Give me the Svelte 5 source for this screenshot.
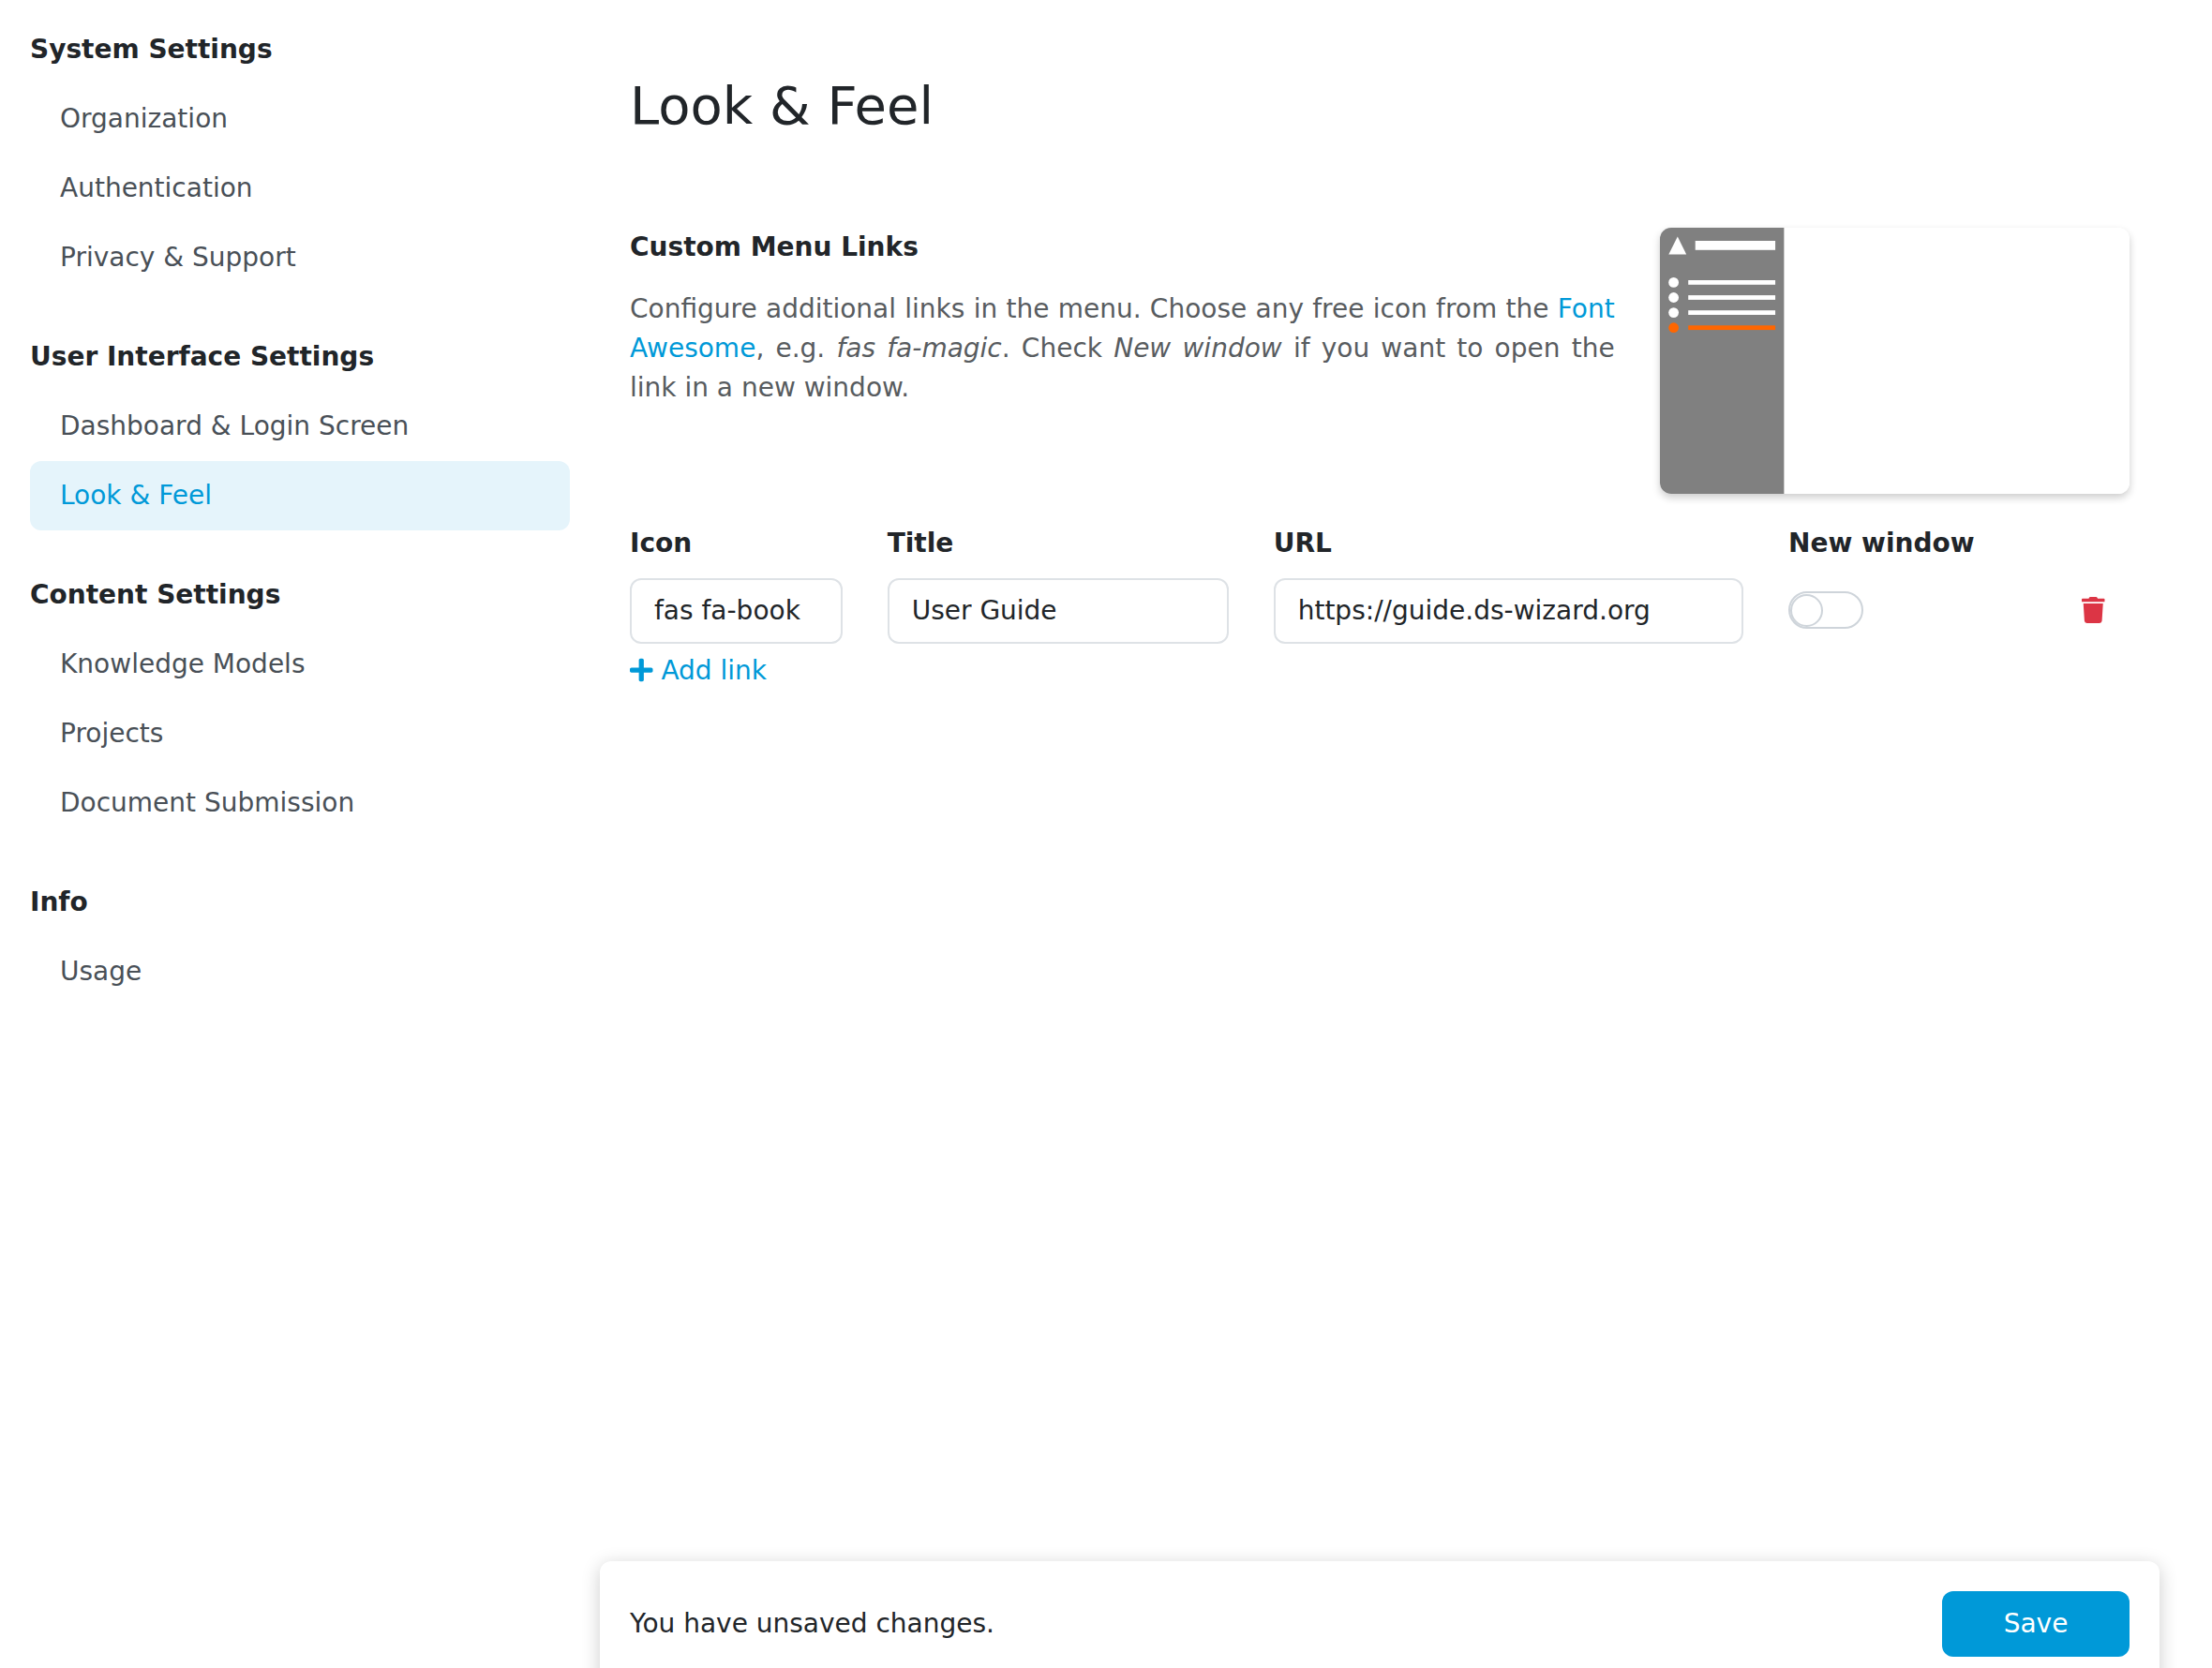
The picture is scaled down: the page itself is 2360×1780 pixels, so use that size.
<script>
  const groups = [
    { title: 'System Settings', items: ['Organization', 'Authentication', 'Privacy & Support'] },
    { title: 'User Interface Settings', items: ['Dashboard & Login Screen', 'Look & Feel'] },
    { title: 'Content Settings', items: ['Knowledge Models', 'Projects', 'Document Submission'] },
    { title: 'Info', items: ['Usage'] }
  ];
  const active = 'Look & Feel';
  const rows = [0, 1, 2, 3];
</script>

<div class="page">
  <nav class="sidebar">
    {#each groups as group}
      <section class="group">
        <strong class="group-title">{group.title}</strong>
        {#each group.items as item}
          <a class="nav-link" class:active={item === active} href="#top">{item}</a>
        {/each}
      </section>
    {/each}
  </nav>

  <main class="content">
    <h1>Look &amp; Feel</h1>

    <div class="intro">
      <div class="intro-text">
        <strong class="label">Custom Menu Links</strong>
        <p>
          Configure additional links in the menu. Choose any free icon from the <a href="#top">Font Awesome</a>, e.g. <em>fas fa-magic</em>. Check <em>New window</em> if you want to open the link in a new window.
        </p>
      </div>
      <svg class="preview" viewBox="0 0 501 284" preserveAspectRatio="none">
        <rect width="501" height="284" fill="#fff" />
        <rect width="132.3" height="284" fill="#808080" />
        <path d="M18.8 9.5 28.2 28.6H9.3Z" fill="#fff" />
        <rect x="37.7" y="14" width="85.3" height="9.8" fill="#fff" />
        {#each rows as i}
          <g class="line" class:accent={i === 3}>
            <circle cx="14.6" cy={58.4 + i * 16.1} r="5.4" />
            <rect x="30.2" y={56 + i * 16.1} width="92.8" height="4.8" />
          </g>
        {/each}
      </svg>
    </div>

    <div class="grid head">
      <strong>Icon</strong>
      <strong>Title</strong>
      <strong>URL</strong>
      <strong>New window</strong>
    </div>
    <div class="grid">
      <input value="fas fa-book" aria-label="Icon" />
      <input value="User Guide" aria-label="Title" />
      <input value="https://guide.ds-wizard.org" aria-label="URL" />
      <span class="switch"><span class="knob"></span></span>
      <button class="delete" aria-label="Delete">
        <svg viewBox="0 0 448 512"><path d="M432 32H312l-9.400-18.700A24 24 0 0 0 281.100 0H166.800a23.720 23.720 0 0 0-21.400 13.300L136 32H16A16 16 0 0 0 0 48v32a16 16 0 0 0 16 16h416a16 16 0 0 0 16-16V48a16 16 0 0 0-16-16zM53.200 467a48 48 0 0 0 47.900 45h245.800a48 48 0 0 0 47.900-45L416 128H32z" /></svg>
      </button>
    </div>
    <a class="add" href="#top">
      <svg viewBox="0 0 448 512"><path d="M416 208H272V64c0-17.670-14.330-32-32-32h-32c-17.670 0-32 14.330-32 32v144H32c-17.670 0-32 14.330-32 32v32c0 17.670 14.330 32 32 32h144v144c0 17.670 14.330 32 32 32h32c17.670 0 32-14.330 32-32V304h144c17.670 0 32-14.330 32-32v-32c0-17.670-14.330-32-32-32z" /></svg>
      Add link
    </a>

    <div class="actions">
      <span>You have unsaved changes.</span>
      <button class="save">Save</button>
    </div>
  </main>
</div>

<style>
  :global(body) {
    background: #fff;
  }
  .page {
    display: flex;
    height: 1780px;
    overflow: hidden;
    color: #212529;
    font: 28px/42px 'DejaVu Sans', sans-serif;
  }
  .page *,
  .page {
    box-sizing: border-box;
  }
  a {
    color: #0099d8;
    text-decoration: none;
  }
  .sidebar {
    width: 640px;
    flex: none;
    padding: 16px 32px;
    display: flex;
    flex-direction: column;
    gap: 32px;
  }
  .group {
    display: flex;
    flex-direction: column;
  }
  .group-title {
    padding: 16px 0;
  }
  .nav-link {
    padding: 16px 32px;
    border-radius: 12px;
    color: #495057;
  }
  .nav-link.active {
    background: #e5f4fb;
    color: #0099d8;
  }
  .content {
    width: 1664px;
    padding: 0 32px;
    display: flex;
    flex-direction: column;
  }
  h1 {
    margin: 79px 0 97px;
    font-size: 56px;
    line-height: 67px;
    font-weight: 400;
  }
  .intro {
    display: grid;
    grid-template-columns: 1050.67px 501.33px;
    column-gap: 48px;
  }
  .label {
    display: block;
    margin-bottom: 24px;
  }
  .intro p {
    margin: 0;
    color: #585c5f;
    text-align: justify;
  }
  .preview {
    display: block;
    width: 100%;
    height: 284px;
    border-radius: 12px;
    box-shadow: 0 4px 8px rgba(0, 0, 0, 0.2);
  }
  .line {
    fill: #fff;
  }
  .line.accent {
    fill: #ff6600;
  }
  .grid {
    display: grid;
    grid-template-columns: 226.67px 364px 501.33px 226.67px 89.33px;
    column-gap: 48px;
    align-items: center;
  }
  .head {
    margin: 32px 0 16px;
  }
  input {
    width: 100%;
    height: 70px;
    padding: 11px 24px 13px;
    border: 2px solid #dee2e6;
    border-radius: 12px;
    background: #fff;
    color: #212529;
    font: inherit;
  }
  .switch {
    display: flex;
    align-items: center;
    width: 80px;
    height: 40px;
    margin-bottom: 2px;
    padding-left: 0.5px;
    border: 2px solid #ced4da;
    border-radius: 20px;
  }
  .knob {
    width: 35px;
    height: 35px;
    border: 2px solid #ced4da;
    border-radius: 50%;
  }
  button {
    border: 0;
    font: inherit;
  }
  .delete {
    justify-self: end;
    display: flex;
    margin-bottom: 2px;
    padding: 0 26px;
    background: none;
  }
  .delete svg {
    width: 24.5px;
    height: 28px;
    fill: #dc3545;
  }
  .add {
    display: flex;
    align-items: center;
    gap: 8.9px;
    margin-top: 8px;
  }
  .add svg {
    width: 24.5px;
    height: 28px;
    margin-bottom: 3px;
    fill: #0099d8;
  }
  .actions {
    display: flex;
    align-items: center;
    justify-content: space-between;
    height: 134px;
    margin: auto -32px -20px;
    padding: 0 32px;
    border-radius: 12px 12px 0 0;
    background: #fff;
    box-shadow: 0 4px 20px rgba(0, 0, 0, 0.2);
  }
  .save {
    width: 200px;
    height: 70px;
    border-radius: 12px;
    background: #0099d8;
    color: #fff;
  }
</style>
